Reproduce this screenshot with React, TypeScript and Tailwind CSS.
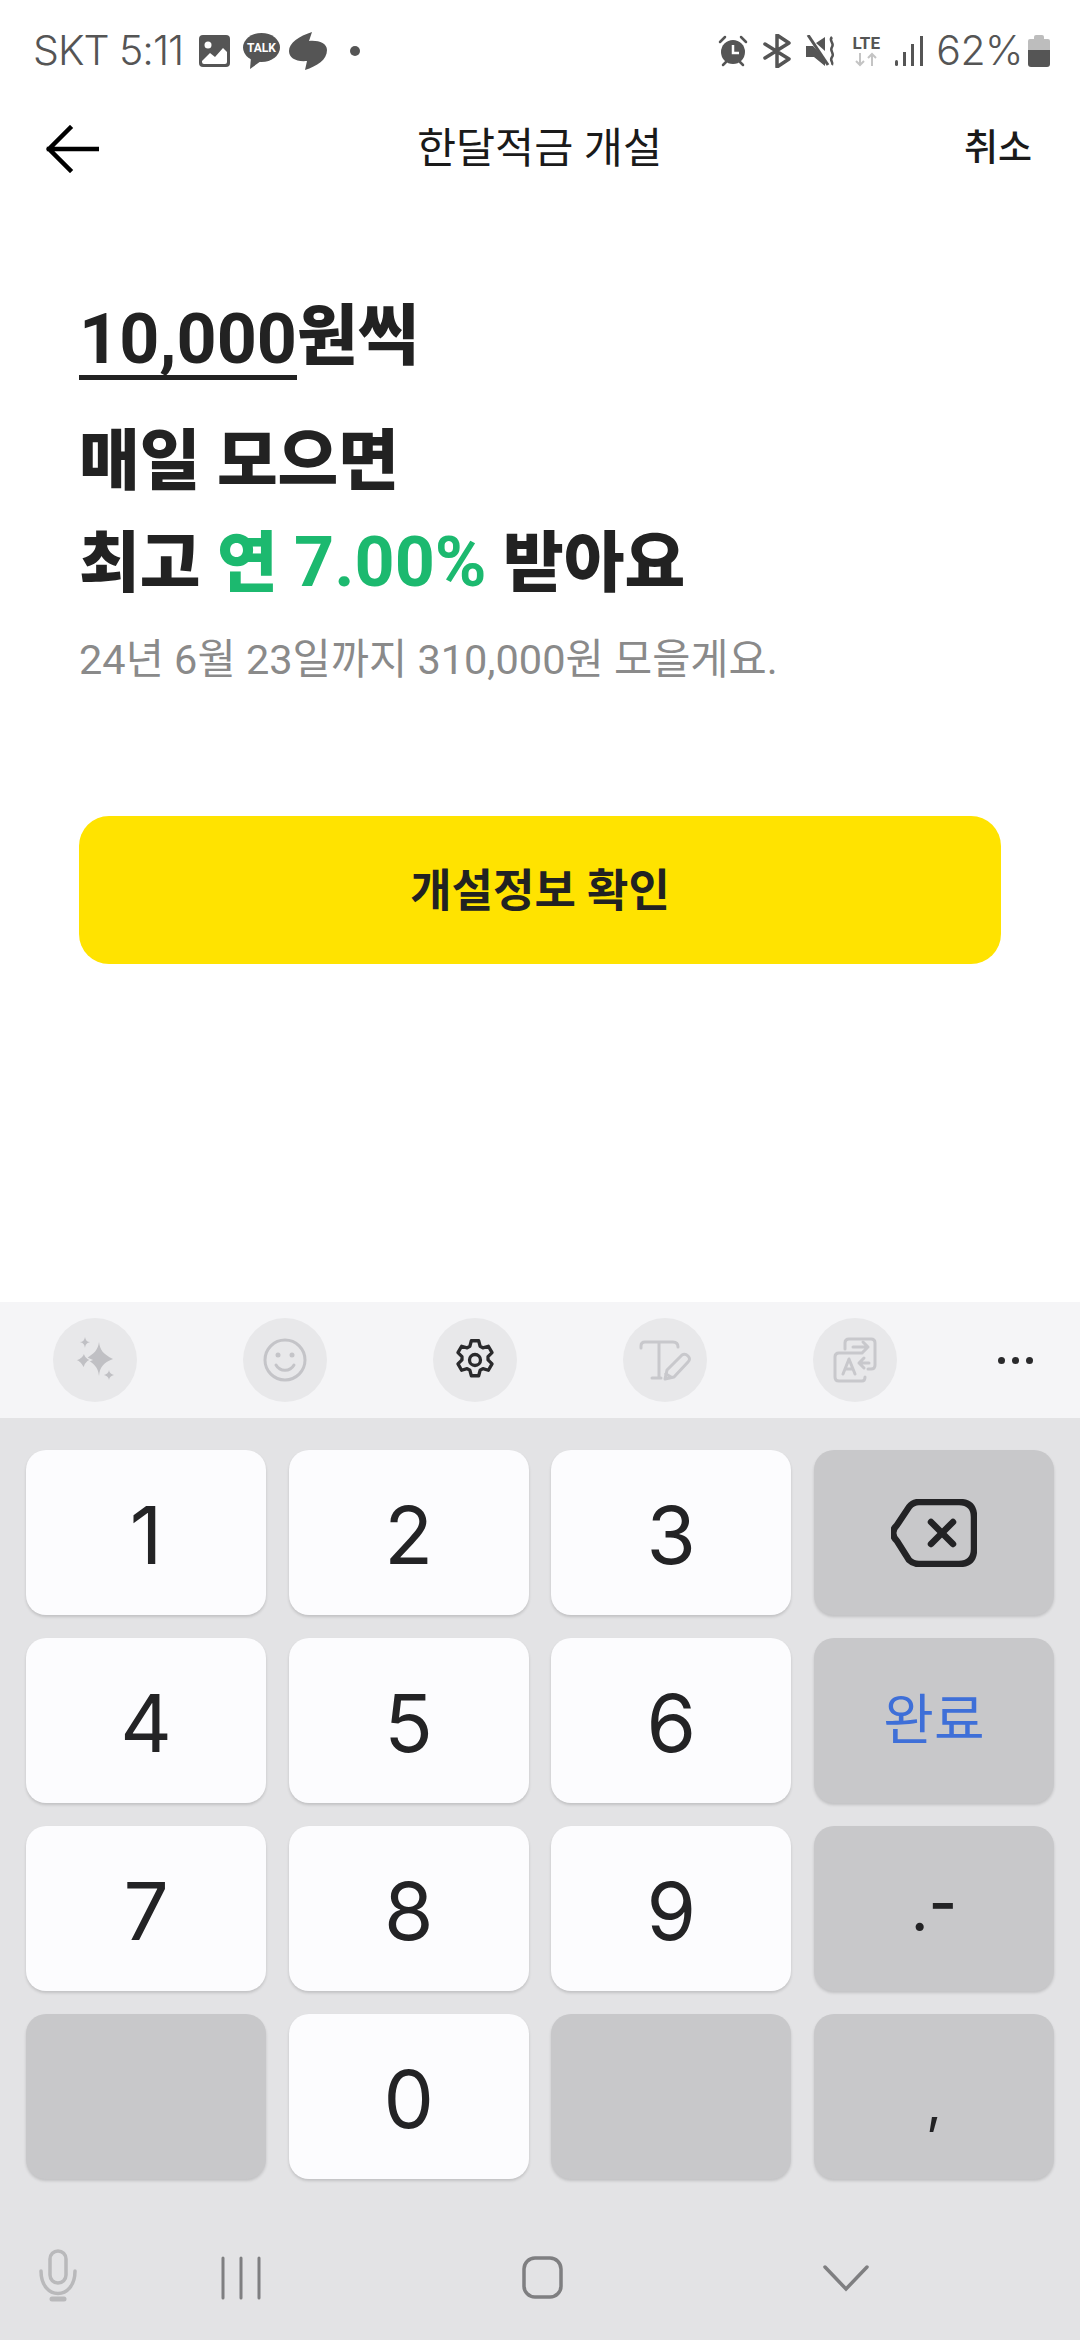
const KR = "font-['Roboto','Noto_Sans_CJK_KR',sans-serif]";

function StatusBar() {
  return (
    <div className="flex h-[100px] items-center justify-between pl-[33px] pr-[30px] pt-[2px] text-[#555555]">
      <div className="flex items-center">
        <span className="font-['Inter',sans-serif] text-[41px] font-light tracking-[-1px]">SKT 5:11</span>
        {/* gallery notification */}
        <svg className="ml-[16px]" width="31" height="32" viewBox="0 0 31 32">
          <rect width="31" height="32" rx="4" fill="#555" />
          <path d="M3 26l8-8 5 4 8-9 4 4v10q0 2-2 2H5q-2 0-2-2z" fill="#fff" />
          <circle cx="9" cy="10" r="3.500" fill="#fff" />
        </svg>
        {/* kakaotalk bubble */}
        <svg className="ml-[13px]" width="37" height="36" viewBox="0 0 37 36">
          <ellipse cx="18.500" cy="14.500" rx="18.500" ry="14.500" fill="#555" />
          <path d="M8 24l-1 12 11-8z" fill="#555" />
          <text x="18.500" y="19" textAnchor="middle" fontSize="12" fontWeight="700" fill="#fff" fontFamily="Roboto, sans-serif">TALK</text>
        </svg>
        {/* kakaostory mark */}
        <svg className="ml-[9px]" width="38" height="38" viewBox="0 0 38 38">
          <path d="M23 0l-3 9c9-1 18 2 18 9 0 10-10 16-22 20l2-9C7 30 0 26 0 19 0 11 10 4 23 0z" fill="#555" />
        </svg>
        <span className="ml-[23px] h-[10px] w-[10px] rounded-full bg-[#555555]" />
      </div>
      <div className="flex items-center">
        {/* alarm */}
        <svg width="30" height="32" viewBox="0 0 30 32">
          <circle cx="15" cy="17" r="12" fill="#555" />
          <path d="M2 7l5-5M28 7l-5-5M5 30l3-3M25 30l-3-3" stroke="#555" strokeWidth="2.500" strokeLinecap="round" />
          <path d="M15 10v8h6" stroke="#fff" strokeWidth="2.500" fill="none" />
        </svg>
        {/* bluetooth */}
        <svg className="ml-[15px]" width="28" height="34" viewBox="0 0 28 34">
          <path d="M2 10l24 15-12 8V1l12 8L2 24" fill="none" stroke="#555" strokeWidth="3.500" strokeLinejoin="round" strokeLinecap="round" />
        </svg>
        {/* muted speaker */}
        <svg className="ml-[15px]" width="30" height="32" viewBox="0 0 30 32">
          <path d="M0 11h7l12 13v7L8 22H0zM10 8l9-6v14z" fill="#555" />
          <path d="M2 0l20 30" stroke="#555" strokeWidth="3" />
          <path d="M26 2c-4 4 3 6 0 10s3 6 0 10 2 5 0 8" fill="none" stroke="#555" strokeWidth="2.500" />
        </svg>
        {/* lte up/down */}
        <div className="ml-[14px] flex w-[32px] flex-col items-center">
          <span className="font-['Roboto',sans-serif] text-[17px] font-bold leading-[17px] text-[#555555]">LTE</span>
          <svg width="24" height="15" viewBox="0 0 24 15">
            <path d="M6 1v12M2 9l4 4 4-4M18 14V2M14 6l4-4 4 4" fill="none" stroke="#c4c4c4" strokeWidth="2" />
          </svg>
        </div>
        {/* signal bars */}
        <svg className="ml-[13px]" width="28" height="30" viewBox="0 0 28 30">
          <rect x="0" y="24" width="3" height="6" rx="1.500" fill="#555" />
          <rect x="8" y="16" width="3" height="14" fill="#555" />
          <rect x="16" y="8" width="3" height="22" fill="#555" />
          <rect x="25" y="0" width="3" height="30" fill="#555" />
        </svg>
        <span className="ml-[13px] font-['Inter',sans-serif] text-[41px] font-light tracking-[-0.5px]">62%</span>
        {/* battery */}
        <div className="ml-[5px] flex h-[32px] w-[22px] flex-col items-center">
          <div className="h-[4px] w-[10px] rounded-t-[2px] bg-[#bdbdbd]" />
          <div className="h-[11px] w-[22px] rounded-t-[2px] bg-[#bdbdbd]" />
          <div className="h-[17px] w-[22px] rounded-b-[3px] bg-[#555555]" />
        </div>
      </div>
    </div>
  );
}

function Header() {
  return (
    <div className="mt-[2px] grid h-[94px] grid-cols-[200px_1fr_200px] items-center pl-[45px] pr-[48px]">
      <svg width="54" height="48" viewBox="0 0 54 48" fill="none" stroke="#000" strokeWidth="4.500" strokeLinecap="square">
        <path d="M52 24H4M25 3L4 24l21 21" />
      </svg>
      <span className="pl-[2px] text-center text-[42.500px] text-[#1a1a1a]">한달적금 개설</span>
      <span className="text-right text-[37px] font-medium text-[#1a1a1a]">취소</span>
    </div>
  );
}

function SavingsSummary() {
  return (
    <div className="px-[79px] pt-[104px] text-[#222222]">
      <div className="flex h-[82px] items-end text-[66px] font-black leading-[82px]">
        <span className="mb-[2px] border-b-[5px] border-[#222222] text-[70px] font-bold leading-[71px]">10,000</span>
        <span className="pb-[4px]">원씩</span>
      </div>
      <h1 className="mt-[30px] text-[66px] font-black leading-[100px]">
        매일 모으면
        <br />
        최고{" "}
        <span className="text-[#1cb96f]">
          연 <span className="text-[70px] font-bold">7.00%</span>
        </span>{" "}
        받아요
      </h1>
      <p className="mt-[18px] text-[41.500px] leading-[56px] text-[#8a8a8a]">24년 6월 23일까지 310,000원 모을게요.</p>
      <button className="mt-[128px] flex h-[148px] w-[922px] items-center justify-center rounded-[30px] bg-[#ffe300] pt-[4px] text-[45px] font-bold text-[#222222]">
        개설정보 확인
      </button>
    </div>
  );
}

function ToolbarButton({ children }: { children: React.ReactNode }) {
  return (
    <div className="flex w-[190px] justify-center">
      <div className="flex h-[84px] w-[84px] items-center justify-center rounded-full bg-[#e8e8ea]">{children}</div>
    </div>
  );
}

function Toolbar() {
  return (
    <div className="flex h-[116px] items-center bg-[#f5f5f7]">
      <ToolbarButton>
        <svg width="42" height="46" viewBox="0 0 42 46" fill="#c0c0c4">
          <path d="M25 5c1 8 4 12 14 17-10 4-13 8-14 17-1-9-5-13-14-17 9-5 13-9 14-17z" />
          <path d="M10 14c1 5 2 7 7 9-5 2-7 6-7 11-1-5-3-9-9-11 6-2 8-4 9-9z" stroke="#e8e8ea" strokeWidth="1.500" />
          <path d="M11 0c.5 3 2 5 5 5-3 1-4.500 2-5 6-.5-4-2-5-5-6 3 0 4.500-2 5-5zM35 33c.5 3 2 4 5 5-3 1-4.500 2-5 5-.5-3-2-4-5-5 3-1 4.500-2 5-5z" />
        </svg>
      </ToolbarButton>
      <ToolbarButton>
        <svg width="44" height="44" viewBox="0 0 44 44" fill="none" stroke="#c4c4c8" strokeWidth="3">
          <circle cx="22" cy="22" r="20" />
          <path d="M13 27c4 7 14 7 18 0" strokeLinecap="round" />
          <circle cx="15" cy="17" r="2.500" fill="#c4c4c8" stroke="none" />
          <circle cx="29" cy="17" r="2.500" fill="#c4c4c8" stroke="none" />
        </svg>
      </ToolbarButton>
      <ToolbarButton>
        <svg width="44" height="46" viewBox="0 0 24 24" fill="none" stroke="#2a2a2c" strokeWidth="1.800" strokeLinejoin="round">
          <path d="M10 1.500h4l.8 3 1.500.9 3-.9 2 3.500-2.200 2.200v1.700l2.200 2.200-2 3.500-3-.9-1.500.9-.8 3h-4l-.8-3-1.500-.9-3 .9-2-3.500 2.200-2.200v-1.700L2.700 8l2-3.500 3 .9 1.500-.9z" />
          <circle cx="12" cy="12" r="3" />
        </svg>
      </ToolbarButton>
      <ToolbarButton>
        <svg width="52" height="42" viewBox="0 0 52 42" fill="none" stroke="#c8c8cc" strokeWidth="3" strokeLinecap="round" strokeLinejoin="round">
          <path d="M2 9V7q0-4 4-4h28q5 0 5 5M20 3v36M13 39h9" />
          <path d="M26 40l2-9 15-15q3-2 6 1t0 6L35 38z" />
          <path d="M27 35l5 3" />
        </svg>
      </ToolbarButton>
      <ToolbarButton>
        <svg width="44" height="46" viewBox="0 0 44 46" fill="none" stroke="#c8c8cc" strokeWidth="3" strokeLinecap="round" strokeLinejoin="round">
          <path d="M12 12V6q0-4 4-4h22q4 0 4 4v22q0 4-4 4h-3" />
          <path d="M29 16H6q-4 0-4 4v20q0 4 4 4h23q3 0 3-4" />
          <path d="M20 10h15M30 5l5 5-5 5" />
          <path d="M36 26H26M31 21l-5 5 5 5" />
          <path d="M10 37l6-15 6 15M12 32h8" />
        </svg>
      </ToolbarButton>
      <div className="flex w-[130px] justify-center gap-[7px]">
        <span className="h-[7px] w-[7px] rounded-full bg-[#2a2a2c]" />
        <span className="h-[7px] w-[7px] rounded-full bg-[#2a2a2c]" />
        <span className="h-[7px] w-[7px] rounded-full bg-[#2a2a2c]" />
      </div>
    </div>
  );
}

function NumKey({ label }: { label: string }) {
  return (
    <div className="flex h-[165px] items-center justify-center rounded-[20px] bg-[#fcfcfe] pt-[4px] font-['Inter',sans-serif] text-[80px] font-normal text-[#232325] shadow-[0_2px_3px_rgba(0,0,0,0.15)]">
      {label}
    </div>
  );
}

function SideKey({ children }: { children?: React.ReactNode }) {
  return (
    <div className="flex h-[165px] items-center justify-center rounded-[20px] bg-[#c8c8ca] text-[#232325] shadow-[0_2px_3px_rgba(0,0,0,0.15)]">
      {children}
    </div>
  );
}

function Keypad() {
  return (
    <div className="grid grid-cols-4 gap-x-[22.600px] gap-y-[23px] bg-[#e3e3e5] px-[26px] pb-[23px] pt-[32px]">
      <NumKey label="1" />
      <NumKey label="2" />
      <NumKey label="3" />
      <SideKey>
        <svg width="86" height="68" viewBox="0 0 86 68" fill="none" stroke="#232325" strokeWidth="6.500" strokeLinecap="round" strokeLinejoin="round">
          <path d="M28 3h40q15 0 15 15v32q0 15-15 15H28q-6 0-10-4L6 42q-8-8 0-16L18 8q4-5 10-5z" />
          <path d="M40 23l22 22M62 23L40 45" />
        </svg>
      </SideKey>
      <NumKey label="4" />
      <NumKey label="5" />
      <NumKey label="6" />
      <SideKey>
        <span className="text-[55px] text-[#3e6fd8]">완료</span>
      </SideKey>
      <NumKey label="7" />
      <NumKey label="8" />
      <NumKey label="9" />
      <SideKey>
        <span className="font-['Inter',sans-serif] text-[62px] font-normal">
          .<span className="inline-block -translate-y-[6px] font-medium">-</span>
        </span>
      </SideKey>
      <SideKey />
      <NumKey label="0" />
      <SideKey />
      <SideKey>
        <span className="pt-[14px] font-['Inter',sans-serif] text-[54px] font-normal">,</span>
      </SideKey>
    </div>
  );
}

function NavBar() {
  return (
    <div className="relative flex h-[138px] items-center bg-[#e3e3e5]">
      {/* mic */}
      <svg className="absolute left-[38px] top-[47px]" width="42" height="54" viewBox="0 0 42 54" fill="none" stroke="#b9b9bb" strokeWidth="3.500">
        <rect x="12" y="2" width="16" height="32" rx="8" />
        <path d="M3 22c0 30 34 30 34 0" strokeLinecap="round" />
        <path d="M14 50h12" strokeWidth="5" strokeLinecap="round" />
      </svg>
      {/* recents */}
      <svg className="absolute left-[220px] top-[54px]" width="42" height="44" viewBox="0 0 42 44" stroke="#7f7f81" strokeWidth="3">
        <path d="M3 2v40M21 2v40M39 2v40" strokeLinecap="round" />
      </svg>
      {/* home */}
      <svg className="absolute left-[521px] top-[53px]" width="44" height="44" viewBox="0 0 44 44" fill="none" stroke="#7f7f81" strokeWidth="3.500">
        <rect x="3" y="3" width="37" height="39" rx="11" />
      </svg>
      {/* keyboard hide */}
      <svg className="absolute left-[823px] top-[62px]" width="46" height="28" viewBox="0 0 46 28" fill="none" stroke="#7f7f81" strokeWidth="3.500" strokeLinecap="round">
        <path d="M2 3l21 22L44 3" />
      </svg>
    </div>
  );
}

export default function App() {
  return (
    <div className={`flex h-[2340px] w-[1080px] flex-col overflow-hidden bg-white ${KR}`}>
      <StatusBar />
      <Header />
      <div className="min-h-0 flex-1">
        <SavingsSummary />
      </div>
      <Toolbar />
      <Keypad />
      <NavBar />
    </div>
  );
}
